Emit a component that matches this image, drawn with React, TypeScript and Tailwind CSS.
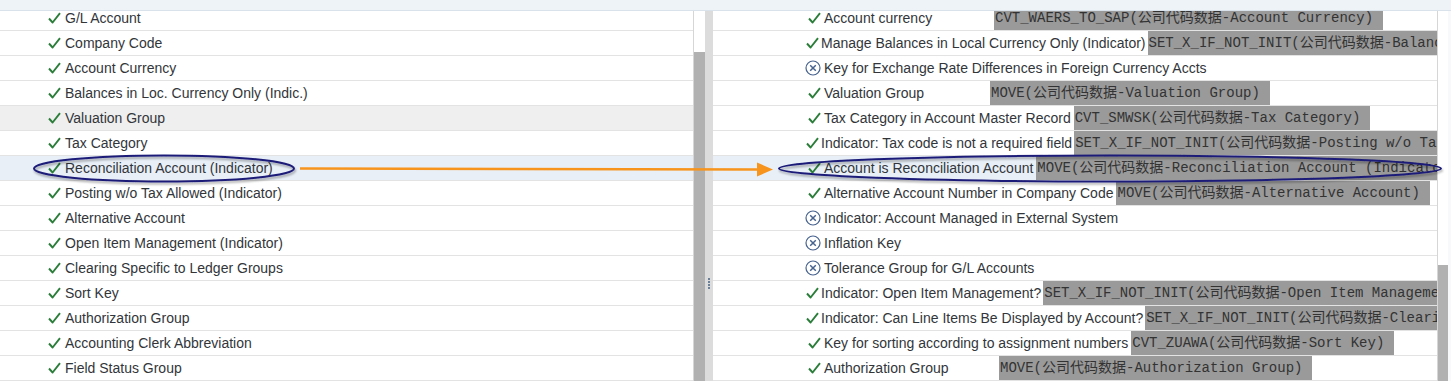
import React from 'react';

type LeftRow = { label: string; bg?: string };
type RightRow = {
  icon: 'check' | 'x';
  tight?: boolean;
  label: string;
  labelW?: string;
  code?: string;
};

const leftRows: LeftRow[] = [
  { label: 'G/L Account' },
  { label: 'Company Code' },
  { label: 'Account Currency' },
  { label: 'Balances in Loc. Currency Only (Indic.)' },
  { label: 'Valuation Group', bg: 'bg-[#efefef]' },
  { label: 'Tax Category' },
  { label: 'Reconciliation Account (Indicator)', bg: 'bg-[#e8eff7]' },
  { label: 'Posting w/o Tax Allowed (Indicator)' },
  { label: 'Alternative Account' },
  { label: 'Open Item Management (Indicator)' },
  { label: 'Clearing Specific to Ledger Groups' },
  { label: 'Sort Key' },
  { label: 'Authorization Group' },
  { label: 'Accounting Clerk Abbreviation' },
  { label: 'Field Status Group' },
];

const rightRows: RightRow[] = [
  { icon: 'check', label: 'Account currency', labelW: 'w-[167px]', code: 'CVT_WAERS_TO_SAP(公司代码数据-Account Currency)' },
  { icon: 'check', tight: true, label: 'Manage Balances in Local Currency Only (Indicator)', code: 'SET_X_IF_NOT_INIT(公司代码数据-Balances in Local Currency Only (Indicator))' },
  { icon: 'x', label: 'Key for Exchange Rate Differences in Foreign Currency Accts' },
  { icon: 'check', label: 'Valuation Group', labelW: 'w-[163px]', code: 'MOVE(公司代码数据-Valuation Group)' },
  { icon: 'check', label: 'Tax Category in Account Master Record', code: 'CVT_SMWSK(公司代码数据-Tax Category)' },
  { icon: 'check', tight: true, label: 'Indicator: Tax code is not a required field', code: 'SET_X_IF_NOT_INIT(公司代码数据-Posting w/o Tax Allowed (Indicator))' },
  { icon: 'check', label: 'Account is Reconciliation Account', code: 'MOVE(公司代码数据-Reconciliation Account (Indicator))' },
  { icon: 'check', label: 'Alternative Account Number in Company Code', code: 'MOVE(公司代码数据-Alternative Account)' },
  { icon: 'x', label: 'Indicator: Account Managed in External System' },
  { icon: 'x', label: 'Inflation Key' },
  { icon: 'x', label: 'Tolerance Group for G/L Accounts' },
  { icon: 'check', tight: true, label: 'Indicator: Open Item Management?', code: 'SET_X_IF_NOT_INIT(公司代码数据-Open Item Management (Indicator))' },
  { icon: 'check', tight: true, label: 'Indicator: Can Line Items Be Displayed by Account?', code: 'SET_X_IF_NOT_INIT(公司代码数据-Clearing Specific to Ledger Groups)' },
  { icon: 'check', label: 'Key for sorting according to assignment numbers', code: 'CVT_ZUAWA(公司代码数据-Sort Key)' },
  { icon: 'check', label: 'Authorization Group', labelW: 'w-[172px]', code: 'MOVE(公司代码数据-Authorization Group)' },
];

function CheckIcon() {
  return (
    <svg width="13" height="12" viewBox="0 0 13 12" className="shrink-0">
      <path d="M1 6.5 L4.6 10.5 L12 1.2" fill="none" stroke="#2b7d3a" strokeWidth="1.9" strokeLinejoin="round" />
    </svg>
  );
}

function CrossIcon() {
  return (
    <svg width="16" height="16" viewBox="0 0 16 16" className="shrink-0">
      <circle cx="8" cy="8" r="7" fill="none" stroke="#46628e" strokeWidth="1.2" />
      <path d="M5.2 5.2 L10.8 10.8 M10.8 5.2 L5.2 10.8" stroke="#46628e" strokeWidth="1.5" />
    </svg>
  );
}

export default function App() {
  return (
    <div className="relative w-[1451px] h-[381px] overflow-hidden bg-white font-['Liberation_Sans',Arial,sans-serif] text-[14px] text-[#32363a]">
      {/* top toolbar strip */}
      <div className="h-[11px] bg-[#eef3f8] border-b border-[#d9e1ea]" />

      <div className="flex h-[370px]">
        {/* left table */}
        <div className="w-[693px] overflow-hidden">
          <div className="-mt-[5px]">
            {leftRows.map((r, i) => (
              <div key={i} className={`h-[25px] border-b border-[#e3e3e3] flex items-center gap-[4px] pl-[48px] ${r.bg ?? ''}`}>
                <CheckIcon />
                <span className="whitespace-nowrap">{r.label}</span>
              </div>
            ))}
          </div>
        </div>

        {/* left scrollbar */}
        <div className="w-[12px] border-l border-[#d6d6d6] flex flex-col">
          <div className="h-[41px] bg-white" />
          <div className="flex-1 bg-[#b1b1b1]" />
        </div>

        {/* splitter */}
        <div className="w-[8px] bg-[#dcdcdc] flex flex-col items-center pt-[267px] gap-[1px]">
          <div className="w-[2px] h-[2px] bg-[#6b7f99]" />
          <div className="w-[2px] h-[2px] bg-[#6b7f99]" />
          <div className="w-[2px] h-[2px] bg-[#6b7f99]" />
          <div className="w-[2px] h-[2px] bg-[#6b7f99]" />
        </div>

        {/* right table */}
        <div className="w-[724px] overflow-hidden">
          <div className="-mt-[5px]">
            {rightRows.map((r, i) => (
              <div
                key={i}
                className={`h-[25px] border-b border-[#e3e3e3] flex items-center whitespace-nowrap ${i === 6 ? 'bg-[#e8eff7]' : ''} ${r.tight ? 'pl-[93px] gap-[2px]' : r.icon === 'x' ? 'pl-[92px] gap-[3px]' : 'pl-[95px] gap-[3px]'}`}
              >
                {r.icon === 'check' ? <CheckIcon /> : <CrossIcon />}
                <span className={`shrink-0 ${r.labelW ?? ''}`}>{r.label}</span>
                {r.code && (
                  <span className="h-full flex items-center bg-[#9a9a9a] text-[#333] pl-[1px] pr-[10px] font-['Liberation_Mono','Noto_Sans_CJK_SC',monospace] text-[14px]">
                    {r.code}
                  </span>
                )}
              </div>
            ))}
          </div>
        </div>

        {/* right scrollbar */}
        <div className="w-[14px] border-l border-[#d6d6d6] flex flex-col bg-[#f7f9fb]">
          <div className="h-[254px] bg-white w-[10px]" />
          <div className="flex-1 bg-[#b1b1b1] w-[10px]" />
        </div>
      </div>

      {/* annotation overlay */}
      <svg className="absolute inset-0 pointer-events-none" width="1451" height="381" viewBox="0 0 1451 381">
        <defs>
          <filter id="sh" x="-10%" y="-50%" width="120%" height="200%">
            <feDropShadow dx="1" dy="2" stdDeviation="1.2" floodColor="#000" floodOpacity="0.35" />
          </filter>
        </defs>
        <ellipse cx="164" cy="168.5" rx="130" ry="13" fill="none" stroke="#1c1c78" strokeWidth="2" filter="url(#sh)" />
        <line x1="300" y1="168.5" x2="760" y2="169.5" stroke="#f7941d" strokeWidth="2.5" />
        <polygon points="757,162.5 773,169.5 757,176.5" fill="#f7941d" />
        <ellipse cx="1110" cy="168.5" rx="331" ry="13" fill="none" stroke="#1c1c78" strokeWidth="2" filter="url(#sh)" />
      </svg>
    </div>
  );
}
